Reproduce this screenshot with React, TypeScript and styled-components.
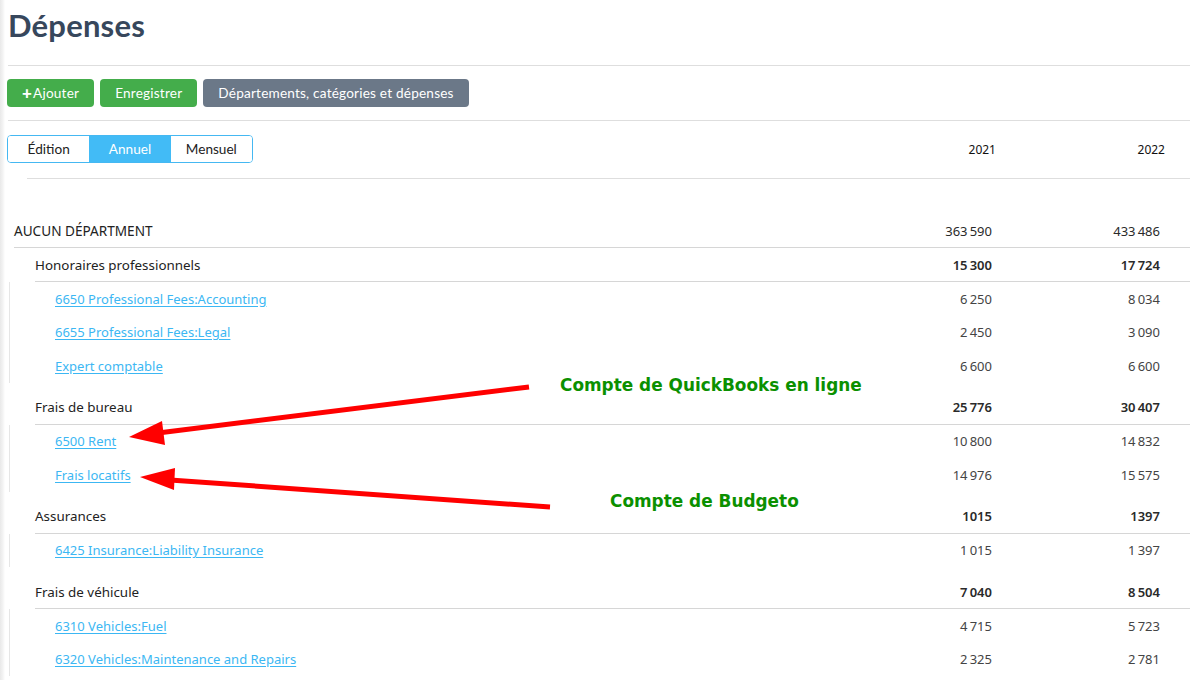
import React from 'react';
import styled, { createGlobalStyle } from 'styled-components';

const GlobalStyle = createGlobalStyle`
  html, body {
    margin: 0;
    padding: 0;
    background: linear-gradient(to right, #e9e9e9 0, #f4f4f4 3px, #fff 5px);
    font-family: "Noto Sans", "Open Sans", sans-serif;
    color: #222;
  }
`;

const Page = styled.div`
  position: relative;
  width: 1190px;
  height: 680px;
  overflow: hidden;
  padding-left: 8px;
  box-sizing: border-box;
`;

const Title = styled.h1`
  margin: 8px 0 0;
  font-family: "Lato", "Open Sans", sans-serif;
  font-weight: 700;
  font-size: 31px;
  line-height: 34px;
  color: #37475c;
  letter-spacing: 0.2px;
`;

const Divider = styled.div<{ $indent?: number; $top?: number }>`
  height: 1px;
  background: #dedede;
  margin-left: ${p => p.$indent || 0}px;
  margin-top: ${p => p.$top || 0}px;
`;

const Toolbar = styled.div`
  display: flex;
  gap: 6px;
  margin: 13px 0 13px -1px;
`;

const Button = styled.button<{ $variant?: 'green' | 'gray' }>`
  height: 28px;
  padding: 0 15px;
  border: none;
  border-radius: 4px;
  background: ${p => (p.$variant === 'gray' ? '#6b7888' : '#44ad4b')};
  color: #fff;
  font-family: "Lato", "Open Sans", sans-serif;
  font-size: 13.6px;
  letter-spacing: 0.2px;
  display: flex;
  align-items: center;
  gap: 1px;
  cursor: pointer;
`;

const Plus = styled.span`
  font-weight: 900;
  font-size: 17px;
  line-height: 1;
  margin-top: -2px;
`;

const HeadRow = styled.div`
  display: grid;
  grid-template-columns: 1fr 170px 169px;
  align-items: center;
  padding: 14px 25px 0 0;
`;

const Toggle = styled.div`
  display: flex;
  width: 246px;
  height: 28px;
  margin-left: -1px;
  border: 1px solid #45b8f2;
  border-radius: 4px;
  overflow: hidden;
  box-sizing: border-box;
`;

const ToggleItem = styled.div<{ $active?: boolean }>`
  flex: 1;
  display: flex;
  align-items: center;
  justify-content: center;
  font-family: "Lato", "Open Sans", sans-serif;
  font-size: 13.6px;
  background: ${p => (p.$active ? '#42bbf6' : '#fff')};
  color: ${p => (p.$active ? '#fff' : '#222')};
`;

const Year = styled.div`
  text-align: right;
  font-size: 12px;
  color: #111;
`;

const Table = styled.div`
  margin-top: 35px;
`;

const Row = styled.div<{ $indent: number; $kind: 'dept' | 'group' | 'item' }>`
  display: grid;
  grid-template-columns: 1fr 168px 168px;
  align-items: center;
  height: ${p => (p.$kind === 'item' ? '33.5px' : '33px')};
  margin-left: ${p => p.$indent}px;
  padding-right: 30px;
  border-bottom: ${p => (p.$kind === 'item' ? 'none' : '1px solid #d6d6d6')};
  font-size: 13px;
`;

const Label = styled.div<{ $caps?: boolean }>`
  color: #222;
  font-size: ${p => (p.$caps ? '13.6px' : '13.4px')};
`;

const Link = styled.a`
  color: #3cb7f3;
  text-decoration: underline;
  text-underline-offset: 2px;
  font-size: 13px;
  cursor: pointer;
`;

const Amount = styled.div<{ $strong?: boolean; $dark?: boolean }>`
  text-align: right;
  color: ${p => (p.$strong || p.$dark ? '#2a2a2a' : '#444')};
  font-weight: ${p => (p.$strong ? 600 : 400)};
`;

const Group = styled.div`
  margin-bottom: 8px;
`;

const Children = styled.div`
  margin-left: 1px;
  border-left: 1px solid #e6e6e6;
`;

const Note = styled.div<{ $x: number; $y: number }>`
  position: absolute;
  left: ${p => p.$x}px;
  top: ${p => p.$y}px;
  font-family: "DejaVu Sans", Verdana, sans-serif;
  font-weight: 700;
  font-size: 16.9px;
  line-height: 20px;
  color: #0b9000;
  white-space: nowrap;
`;

const Overlay = styled.svg`
  position: absolute;
  left: 0;
  top: 0;
  pointer-events: none;
`;

const fmt = (n: number) => String(n).replace(/\B(?=(\d{3})+(?!\d))/g, '\u202f');

// group totals below 2000 show without a separator in the source
const headFmt = (n: number) => (n < 2000 ? String(n) : fmt(n));

type Item = { name: string; y1: number; y2: number };
type Cat = { name: string; y1: number; y2: number; items: Item[] };

const data: Cat[] = [
  {
    name: 'Honoraires professionnels', y1: 15300, y2: 17724,
    items: [
      { name: '6650 Professional Fees:Accounting', y1: 6250, y2: 8034 },
      { name: '6655 Professional Fees:Legal', y1: 2450, y2: 3090 },
      { name: 'Expert comptable', y1: 6600, y2: 6600 },
    ],
  },
  {
    name: 'Frais de bureau', y1: 25776, y2: 30407,
    items: [
      { name: '6500 Rent', y1: 10800, y2: 14832 },
      { name: 'Frais locatifs', y1: 14976, y2: 15575 },
    ],
  },
  {
    name: 'Assurances', y1: 1015, y2: 1397,
    items: [{ name: '6425 Insurance:Liability Insurance', y1: 1015, y2: 1397 }],
  },
  {
    name: 'Frais de véhicule', y1: 7040, y2: 8504,
    items: [
      { name: '6310 Vehicles:Fuel', y1: 4715, y2: 5723 },
      { name: '6320 Vehicles:Maintenance and Repairs', y1: 2325, y2: 2781 },
    ],
  },
];

const App: React.FC = () => {
  return (
    <>
      <GlobalStyle />
      <Page>
        <Title>Dépenses</Title>
        <Divider $top={23} />
        <Toolbar>
          <Button><Plus>+</Plus>Ajouter</Button>
          <Button>Enregistrer</Button>
          <Button $variant="gray">Départements, catégories et dépenses</Button>
        </Toolbar>
        <Divider />
        <HeadRow>
          <Toggle>
            <ToggleItem>Édition</ToggleItem>
            <ToggleItem $active>Annuel</ToggleItem>
            <ToggleItem>Mensuel</ToggleItem>
          </Toggle>
          <Year>2021</Year>
          <Year>2022</Year>
        </HeadRow>
        <Divider $indent={19} $top={15} />

        <Table>
          <Row $indent={6} $kind="dept">
            <Label $caps>AUCUN DÉPARTMENT</Label>
            <Amount $dark>{fmt(363590)}</Amount>
            <Amount $dark>{fmt(433486)}</Amount>
          </Row>
          {data.map(cat => (
            <Group key={cat.name}>
              <Row $indent={27} $kind="group">
                <Label>{cat.name}</Label>
                <Amount $strong>{headFmt(cat.y1)}</Amount>
                <Amount $strong>{headFmt(cat.y2)}</Amount>
              </Row>
              <Children>
                {cat.items.map(it => (
                  <Row key={it.name} $indent={45} $kind="item">
                    <div><Link>{it.name}</Link></div>
                    <Amount>{fmt(it.y1)}</Amount>
                    <Amount>{fmt(it.y2)}</Amount>
                  </Row>
                ))}
              </Children>
            </Group>
          ))}
        </Table>

        <Overlay width="1190" height="680" viewBox="0 0 1190 680">
          <line x1="529" y1="387" x2="158" y2="433" stroke="#ff0000" strokeWidth="5" />
          <polygon points="129,437 162,421 165,445" fill="#ff0000" />
          <line x1="550" y1="507" x2="170" y2="480" stroke="#ff0000" strokeWidth="5" />
          <polygon points="140,477 175,468 174,490" fill="#ff0000" />
        </Overlay>
        <Note $x={560} $y={375}>Compte de QuickBooks en ligne</Note>
        <Note $x={610} $y={491}>Compte de Budgeto</Note>
      </Page>
    </>
  );
};

export default App;
